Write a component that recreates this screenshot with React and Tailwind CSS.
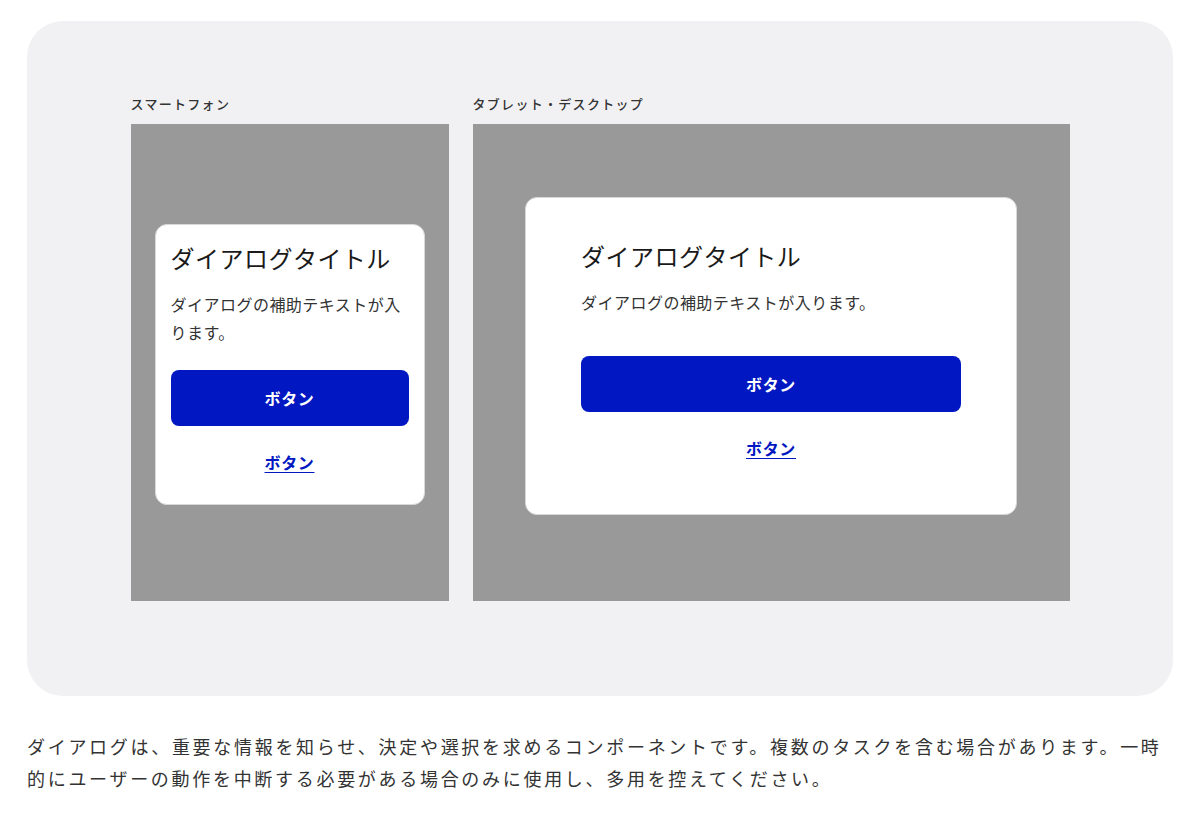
const font = "font-['Noto_Sans_CJK_JP','Noto_Sans',sans-serif]"

function Dialog({ wide }) {
  return (
    <div
      className={
        wide
          ? 'w-[492px] rounded-xl border border-[#d8d8d8] bg-white px-[55px] pt-10 pb-[54px]'
          : 'w-[270px] rounded-xl border border-[#d8d8d8] bg-white px-[15px] pt-[15px] pb-[30px]'
      }
    >
      <h2 className="text-[24px] leading-[1.5] tracking-[0.02em] text-[#1a1a1a]">
        ダイアログタイトル
      </h2>
      <p className="mt-[14px] text-[16px] leading-[1.75] tracking-[0.03em] text-[#333]">
        ダイアログの補助テキストが入ります。
      </p>
      <button
        className={`${wide ? 'mt-10' : 'mt-6'} flex h-14 w-full items-center justify-center rounded-lg bg-[#0017c1] text-[16px] font-bold tracking-[0.04em] text-white`}
      >
        ボタン
      </button>
      <div className="mt-6 text-center leading-[1.5]">
        <a
          href="#"
          className="text-[16px] font-bold tracking-[0.04em] text-[#0017c1] underline underline-offset-[3px]"
        >
          ボタン
        </a>
      </div>
    </div>
  )
}

export default function App() {
  return (
    <div className={`${font} min-h-[820px] bg-white px-[27px] pt-[21px]`}>
      <div className="flex justify-center gap-6 rounded-[36px] bg-[#f1f1f4] pt-[73px] pb-[95px]">
        <div>
          <p className="mb-[10px] text-[13px] font-medium leading-[1.5] tracking-[0.1em] text-[#333]">
            スマートフォン
          </p>
          <div className="flex h-[477px] w-[318px] items-center justify-center bg-[#999] pt-[5px]">
            <Dialog />
          </div>
        </div>
        <div>
          <p className="mb-[10px] text-[13px] font-medium leading-[1.5] tracking-[0.1em] text-[#333]">
            タブレット・デスクトップ
          </p>
          <div className="flex h-[477px] w-[597px] items-center justify-center bg-[#999] pb-[13px]">
            <Dialog wide />
          </div>
        </div>
      </div>
      <p className="mt-[34px] text-[18px] leading-[1.83] tracking-[0.15em] text-[#333]">
        ダイアログは、重要な情報を知らせ、決定や選択を求めるコンポーネントです。複数のタスクを含む場合があります。一時的にユーザーの動作を中断する必要がある場合のみに使用し、多用を控えてください。
      </p>
    </div>
  )
}
